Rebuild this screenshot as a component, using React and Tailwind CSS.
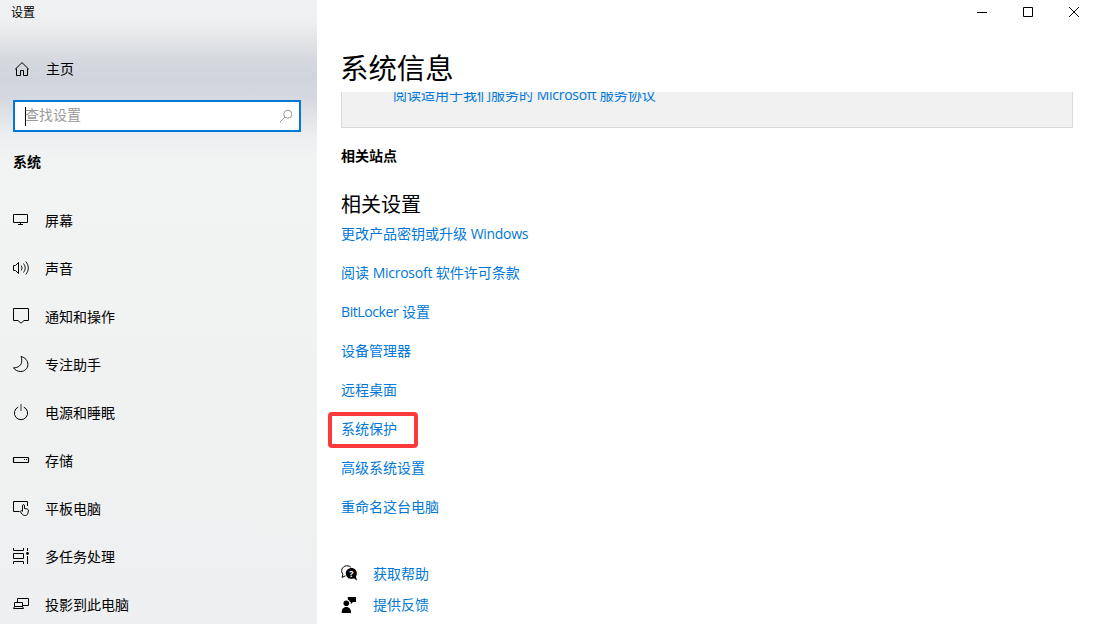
import React from 'react';

const navItems = [
  { icon: 'display', label: '屏幕' },
  { icon: 'sound', label: '声音' },
  { icon: 'notifications', label: '通知和操作' },
  { icon: 'focus', label: '专注助手' },
  { icon: 'power', label: '电源和睡眠' },
  { icon: 'storage', label: '存储' },
  { icon: 'tablet', label: '平板电脑' },
  { icon: 'multitask', label: '多任务处理' },
  { icon: 'project', label: '投影到此电脑' },
];

const relatedLinks = [
  { label: <>更改产品密钥或升级 <span className="tracking-[-0.3px]">Windows</span></> },
  { label: <>阅读 <span className="tracking-[-0.25px]">Microsoft</span> 软件许可条款</> },
  { label: <><span className="tracking-[-0.4px]">BitLocker</span> 设置</> },
  { label: '设备管理器' },
  { label: '远程桌面' },
  { label: '系统保护', highlighted: true },
  { label: '高级系统设置' },
  { label: '重命名这台电脑' },
];

const icons = {
  home: (
    <>
      <path d="M3.2 9.3L10 2.6L16.8 9.3" />
      <path d="M4.5 8.5V15.5H8.5V10.5H11.5V15.5H15.5V8.5" />
    </>
  ),
  display: (
    <>
      <path d="M1.5 3.5H15.5V11.5H1.5Z" />
      <path d="M8.5 12V13.5M6 13.5H11" />
    </>
  ),
  sound: (
    <>
      <path d="M1.5 6.5H3.5L6.5 3.5V14.5L3.5 11.5H1.5Z" />
      <path d="M9.2 6.5Q11 9 9.2 11.5M11.5 4.5Q15 9 11.5 13.5M13.8 2.5Q19 9 13.8 15.5" strokeWidth="0.9" />
    </>
  ),
  notifications: <path d="M1.5 1.5H16.5V13.5H12L9 16.2L6 13.5H1.5Z" />,
  focus: <path d="M9 1.5C13 2.4 15.9 5.6 15.9 9.4C15.9 13.4 12.7 16.5 8.7 16.5C5.6 16.5 2.8 15 1.5 12.8C6.2 13 9.8 10 9.8 5.8C9.8 4.2 9.6 2.8 9 1.5Z" />,
  power: (
    <>
      <path d="M6.2 4.1A6.6 6.6 0 1 0 11.8 4.1" />
      <path d="M9 1V8" strokeWidth="1.8" stroke="#888" />
    </>
  ),
  storage: (
    <>
      <rect x="1.5" y="6.5" width="15" height="5" rx="0.5" strokeWidth="1.2" />
      <path d="M12 8.5H13M14 8.5H15" />
    </>
  ),
  tablet: (
    <>
      <path d="M7.5 12.5H1.5V2.5H15.5V7" />
      <path d="M10.5 12.3V6.8C10.5 5.2 12.5 5.2 12.5 6.8V9.5L15 10C16.2 10.3 16.6 10.9 16.4 12L15.8 14.5C15.4 15.9 14.6 16.5 13.3 16.5C11.8 16.5 10.8 16 10 15L8.4 12.8C8.1 11.6 9.5 11.2 10.5 12.3" />
    </>
  ),
  multitask: (
    <>
      <path d="M1.5 1V3.5H11.5V1" />
      <path d="M1.5 6.5H11.5V11.5H1.5Z" />
      <path d="M1.5 17V14.5H11.5V17" />
      <path d="M15.5 1V4M15.5 9V17" />
      <circle cx="15.5" cy="6.5" r="1.4" fill="currentColor" stroke="none" />
    </>
  ),
  project: (
    <>
      <path d="M5.5 7.5V3.5H16.5V10.5H11" />
      <path d="M2.5 11.5V7.5H10.5V11.5" />
      <path d="M2.5 11.5H10.5L11.5 13.5H1.5Z" />
    </>
  ),
};

const Icon = ({ name }) => (
  <svg className="h-[18px] w-[18px] shrink-0" viewBox="0 0 18 18" fill="none" stroke="currentColor" strokeWidth="1">
    {icons[name]}
  </svg>
);

const Sidebar = () => (
  <aside className="flex w-[317px] shrink-0 flex-col overflow-hidden bg-[linear-gradient(180deg,#f0f1f2_0px,#eeeff0_22px,#e3e5e8_40px,#d6d9df_58px,#d0d4dc_78px,#d5d9df_98px,#e0e3e7_116px,#eceef0_135px,#f2f3f3_160px,#f0f1f1_400px,#eeeff0_624px)]">
    <div className="flex h-6 shrink-0 items-center pt-0.5 pl-[11px] text-xs">设置</div>
    <div className="mt-[21px] flex h-12 shrink-0 items-center gap-4 pl-3 text-sm">
      <Icon name="home" />
      <span>主页</span>
    </div>
    <div className="mx-[13px] mt-[7px] flex h-8 w-72 shrink-0 items-center justify-between border-2 border-[#0078d7] bg-white pr-1.5 pl-2.5">
      <div className="flex items-center">
        <span className="h-[19px] w-px bg-black" />
        <span className="-ml-px pb-0.5 text-sm text-[#999]">查找设置</span>
      </div>
      <svg className="h-[14px] w-[14px]" viewBox="0 0 14 14" fill="none" stroke="#999" strokeWidth="1">
        <circle cx="8.8" cy="5.2" r="4" />
        <path d="M6 8L1 13" />
      </svg>
    </div>
    <h2 className="mt-[18px] flex h-6 shrink-0 items-center pl-[13px] text-sm font-bold">系统</h2>
    <nav className="mt-[22px] shrink-0">
      {navItems.map(item => (
        <div key={item.label} className="flex h-12 items-center gap-[15px] pl-3 text-sm">
          <Icon name={item.icon} />
          <span className="pt-0.5">{item.label}</span>
        </div>
      ))}
    </nav>
  </aside>
);

const WindowButtons = () => (
  <div className="flex h-6 shrink-0 items-center justify-end gap-9 pr-[14px]">
    <svg className="h-[10px] w-[10px]" viewBox="0 0 10 10" stroke="#000"><path d="M0 5.5H10" /></svg>
    <svg className="h-[10px] w-[10px]" viewBox="0 0 10 10" fill="none" stroke="#000"><path d="M0.5 0.5H9.5V9.5H0.5Z" /></svg>
    <svg className="h-[10px] w-[10px]" viewBox="0 0 10 10" stroke="#000"><path d="M0 0L10 10M10 0L0 10" /></svg>
  </div>
);

const App = () => {
  return (
    <div className="flex h-[624px] w-[1093px] overflow-hidden bg-white font-['Open_Sans','Noto_Sans_CJK_SC',sans-serif] text-black">
      <Sidebar />
      <main className="flex flex-1 flex-col overflow-hidden">
        <WindowButtons />
        <h1 className="mt-5 flex h-12 shrink-0 items-center pl-[23px] text-[28.4px]">系统信息</h1>
        <div className="mr-5 ml-6 h-9 shrink-0 overflow-hidden border-x border-b border-[#d9d9d9] bg-[#f1f1f1] pl-[51px]">
          <a className="-mt-[9px] block h-6 text-sm leading-6 whitespace-nowrap text-[#0078d7]">
            阅读适用于我们服务的 <span className="tracking-[-0.25px]">Microsoft</span> 服务协议
          </a>
        </div>
        <h3 className="mt-4 flex h-6 shrink-0 items-center pl-6 text-sm font-bold">相关站点</h3>
        <h2 className="mt-[21px] flex h-8 shrink-0 items-center pl-6 text-xl">相关设置</h2>
        <ul className="-mt-[7px] pl-6 text-sm text-[#0078d7]">
          {relatedLinks.map((link, i) => (
            <li key={i} className="flex h-[39px] items-center">
              <a className="relative">
                {link.label}
                {link.highlighted && (
                  <span className="absolute -top-[7px] -left-[13px] h-9 w-[90px] rounded-[4px] border-4 border-[#fc3a3c]" />
                )}
              </a>
            </li>
          ))}
        </ul>
        <div className="mt-[32px] pl-6 text-sm">
          <div className="flex h-[31px] items-center gap-[15px]">
            <svg className="h-[17px] w-[17px]" viewBox="0 0 17 17">
              <path d="M4.5 10.8L1 12.4L1.9 9.4C-0.6 6.2 0.8 1 5.6 0.8C7.8 0.7 9.2 1.4 10.2 2.6" fill="none" stroke="#000" />
              <path d="M10.4 3C7.3 3 4.8 5.4 4.8 8.4C4.8 11.4 7.3 13.8 10.4 13.8C11.4 13.8 12.3 13.6 13 13.2L16 15.8L15 11.5C17.2 7.5 14.8 3 10.4 3Z" />
              <text x="10.4" y="11.7" fontSize="9" fontWeight="700" textAnchor="middle" fill="#fff">?</text>
            </svg>
            <a className="text-[#0078d7]">获取帮助</a>
          </div>
          <div className="flex h-[31px] items-center gap-4">
            <svg className="h-4 w-4" viewBox="0 0 16 16">
              <circle cx="5.3" cy="6.2" r="2.8" />
              <path d="M0.6 16C0.6 12.2 2.3 10 5.3 10C8.3 10 10.1 12.2 10.1 16Z" />
              <path d="M6.8 0H15V5H12L9.8 7.2V5H9C8.8 3.8 8 2.8 6.8 2.4Z" />
            </svg>
            <a className="text-[#0078d7]">提供反馈</a>
          </div>
        </div>
      </main>
    </div>
  );
};

export default App;
